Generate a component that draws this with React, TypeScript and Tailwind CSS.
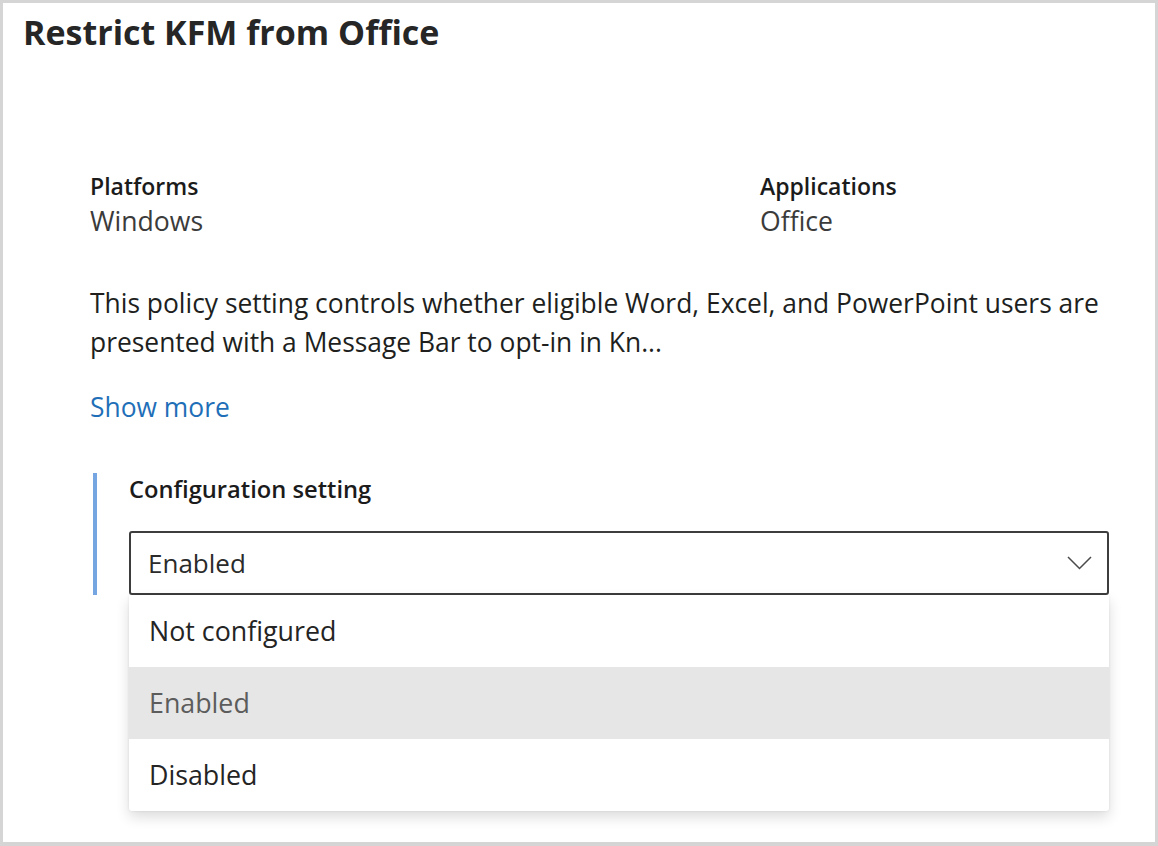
import React from "react";

function Chevron() {
  return (
    <svg width="25" height="14" viewBox="0 0 25 14" fill="none" className="shrink-0">
      <polyline points="1,1 12.5,12.5 24,1" stroke="#4a4a4a" strokeWidth="1.5" fill="none" />
    </svg>
  );
}

export default function App() {
  const options = ["Not configured", "Enabled", "Disabled"];
  return (
    <div className="w-[1158px] h-[846px] overflow-hidden bg-white border-[3px] border-b-4 border-[#d5d5d5] font-['Open_Sans',sans-serif] text-[#201f1e]">
      <h1 className="mt-[7px] pl-[20px] text-[34px] leading-[44px] font-bold text-[#262626]">
        Restrict KFM from Office
      </h1>

      <div className="pl-[87px] pr-[40px]">
        <div className="mt-[116px] grid grid-cols-[670px_1fr]">
          <div>
            <div className="text-[23px] leading-[32px] font-semibold text-[#1b1b1b]">Platforms</div>
            <div className="mt-[2px] text-[26.6px] leading-[34px] text-[#3b3b3b]">Windows</div>
          </div>
          <div>
            <div className="text-[23px] leading-[32px] font-semibold text-[#1b1b1b]">Applications</div>
            <div className="mt-[2px] text-[26.6px] leading-[34px] text-[#3b3b3b]">Office</div>
          </div>
        </div>

        <p className="mt-[46px] text-[26.4px] leading-[39px] text-[#201f1e] whitespace-nowrap">
          This policy setting controls whether eligible Word, Excel, and PowerPoint users are
          <br />
          presented with a Message Bar to opt-in in Kn...
        </p>

        <div className="mt-[26px] text-[26.4px] leading-[39px] text-[#1f6fb8]">Show more</div>

        <div className="mt-[46px] ml-[3px] border-l-4 border-[#76a6e2] pl-[32px]">
          <div className="text-[23.7px] leading-[32px] font-semibold text-[#1b1b1b]">Configuration setting</div>
          <div className="relative mt-[26px] w-[980px]">
            <div className="h-[64px] border-2 border-[#3d3d3d] rounded-[3px] flex items-center justify-between pl-[17px] pr-[15px]">
              <span className="text-[26px] leading-[60px] text-[#2b2b2b]">Enabled</span>
              <Chevron />
            </div>
            <div className="absolute left-0 top-[64px] w-[980px] bg-white rounded-b-[3px] shadow-[0_6px_14px_rgba(0,0,0,0.14),0_0_3px_rgba(0,0,0,0.08)] z-10">
              {options.map((o) => (
                <div
                  key={o}
                  className={
                    o === "Enabled"
                      ? "h-[72px] pl-[20px] text-[26.8px] leading-[72px] bg-[#e6e6e6] text-[#5c5c5c]"
                      : "h-[72px] pl-[20px] text-[26.8px] leading-[72px] text-[#242424]"
                  }
                >
                  {o}
                </div>
              ))}
            </div>
          </div>
        </div>
      </div>
    </div>
  );
}
